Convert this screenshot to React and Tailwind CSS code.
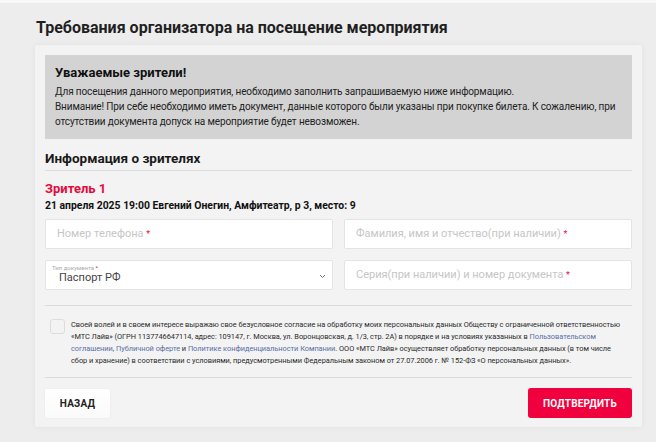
import React from "react";

const font = { fontFamily: "Roboto, 'Liberation Sans', Arial, sans-serif" };

function Field({ label }) {
  return (
    <div className="h-[30px] min-w-0 bg-white border border-[#e4e4e4] rounded-[2px] flex items-center px-[11px]">
      <span className="text-[11px] text-[#c6c6c6] whitespace-nowrap">
        {label} <span className="text-[9px] text-[#d9193f]">*</span>
      </span>
    </div>
  );
}

function Link({ children }) {
  return <span className="text-[#5a6fa6]">{children}</span>;
}

export default function App() {
  return (
    <div className="w-[656px] h-[442px] bg-[#ededed] overflow-hidden text-[#1a1a1a]" style={font}>
      <div className="h-[3px] bg-[#f8f8f8]" />
      <h1 className="ml-[36px] mt-[15px] text-[16px] leading-[20px] font-bold text-[#1f1f1f]">
        Требования организатора на посещение мероприятия
      </h1>
      <div className="ml-[35px] mt-[7px] w-[607px] bg-[#f3f3f3] shadow-[0_0_6px_rgba(0,0,0,0.06)] rounded-[2px] px-[10px] pt-[10px] pb-[9px]">
        <div className="bg-[#d3d3d3] px-[10px] pt-[10px] pb-[10px]">
          <div className="text-[13px] leading-[16px] font-bold text-[#111]">Уважаемые зрители!</div>
          <div className="mt-[3px] text-[10px] leading-[15px] text-[#222] tracking-[-0.12px]">
            <p>Для посещения данного мероприятия, необходимо заполнить запрашиваемую ниже информацию.</p>
            <p>
              Внимание! При себе необходимо иметь документ, данные которого были указаны при покупке билета. К сожалению, при
              отсутствии документа допуск на мероприятие будет невозможен.
            </p>
          </div>
        </div>

        <div className="mt-[11px] text-[13.5px] leading-[16px] font-bold text-[#1a1a1a]">Информация о зрителях</div>
        <div className="mt-[4px] h-px bg-[#dcdcdc]" />

        <div className="mt-[10px] text-[13px] leading-[16px] font-bold text-[#e30b3c]">Зритель 1</div>
        <div className="mt-[2px] text-[10.4px] leading-[14px] font-bold text-[#111]">
          21 апреля 2025 19:00 Евгений Онегин, Амфитеатр, р 3, место: 9
        </div>

        <div className="mt-[6px] grid grid-cols-2 gap-x-[11px] gap-y-[11px]">
          <Field label="Номер телефона" />
          <Field label="Фамилия, имя и отчество(при наличии)" />
          <div className="relative h-[30px] min-w-0 bg-white border border-[#e4e4e4] rounded-[2px] flex items-end pl-[13px] pb-[4px]">
            <span className="absolute left-[6px] top-[3px] text-[6px] leading-[7px] text-[#aaa]">
              Тип документа <span className="text-[#d9193f]">*</span>
            </span>
            <span className="text-[11px] leading-[14px] text-[#444]">Паспорт РФ</span>
            <svg className="absolute right-[6px] top-[13px]" width="7" height="5" viewBox="0 0 7 5">
              <path d="M1 1l2.5 2.5L6 1" fill="none" stroke="#777" strokeWidth="1" />
            </svg>
          </div>
          <Field label="Серия(при наличии) и номер документа" />
        </div>

        <div className="mt-[15px] h-px bg-[#dcdcdc]" />

        <div className="mt-[13px] flex gap-[6px] pl-[5px]">
          <div className="shrink-0 w-[15px] h-[15px] rounded-[3px] border border-[#dcdcdc] bg-[#f3f3f3]" />
          <div className="text-[7.4px] leading-[12px] text-[#2a2a2a] tracking-[-0.03px] whitespace-nowrap">
            <div>
              Своей волей и в своем интересе выражаю свое безусловное согласие на обработку моих персональных данных Обществу с ограниченной ответственностью
            </div>
            <div>
              «МТС Лайв» (ОГРН 1137746647114, адрес: 109147, г. Москва, ул. Воронцовская, д. 1/3, стр. 2А) в порядке и на условиях указанных в{" "}
              <Link>Пользовательском</Link>
            </div>
            <div>
              <Link>соглашении</Link>, <Link>Публичной оферте</Link> и <Link>Политике конфиденциальности Компании</Link>. ООО «МТС Лайв» осуществляет обработку персональных данных (в том числе
            </div>
            <div>
              сбор и хранение) в соответствии с условиями, предусмотренными Федеральным законом от 27.07.2006 г. № 152-ФЗ «О персональных данных».
            </div>
          </div>
        </div>

        <div className="mt-[10px] h-px bg-[#dcdcdc]" />

        <div className="mt-[10px] flex justify-between items-center">
          <button className="w-[65px] h-[29px] bg-gradient-to-b from-white to-[#fafafa] rounded-[2px] shadow-[0_0_3px_rgba(0,0,0,0.05)] text-[10px] font-bold text-[#222] tracking-[0.2px]">
            НАЗАД
          </button>
          <button className="w-[104px] h-[30px] bg-[#f0003c] rounded-[3px] text-[10px] font-bold text-white tracking-[0.2px]">
            ПОДТВЕРДИТЬ
          </button>
        </div>
      </div>
    </div>
  );
}
